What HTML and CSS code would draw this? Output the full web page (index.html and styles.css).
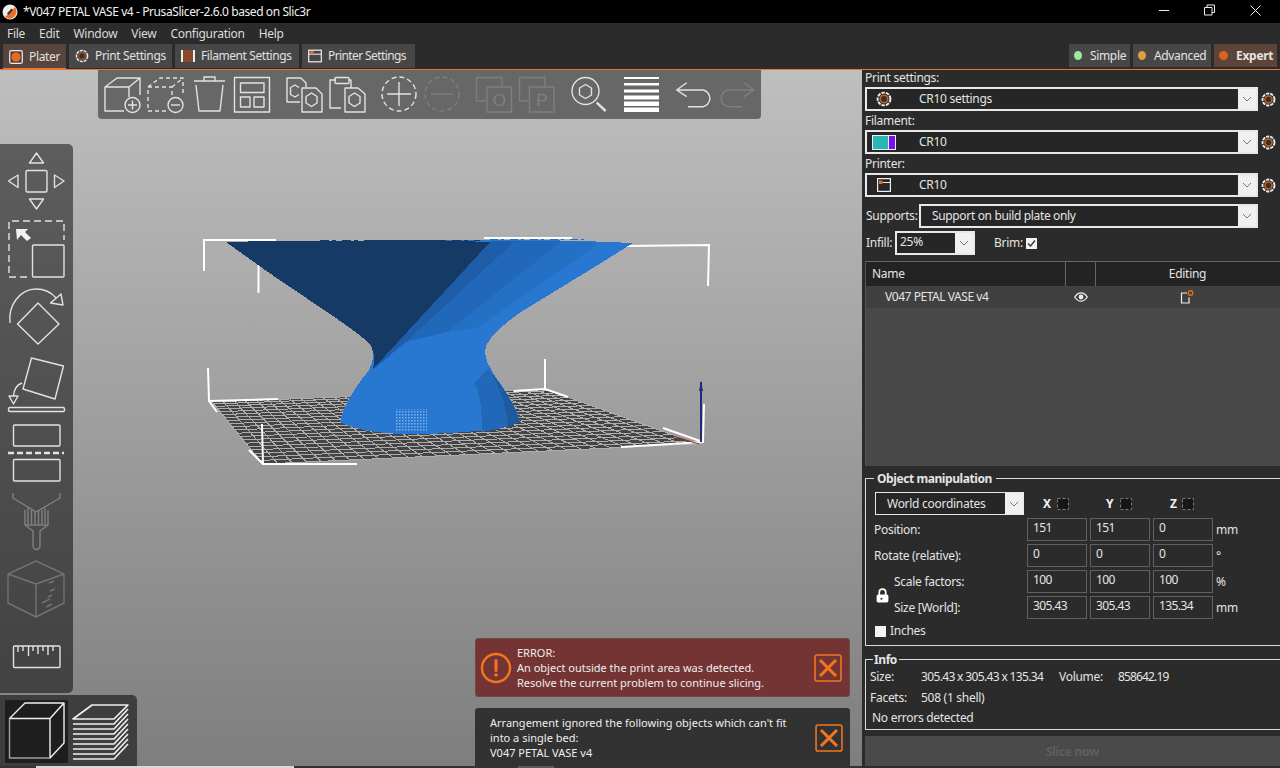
FILE: index.html
```html
<!DOCTYPE html>
<html lang="en">
<head>
<meta charset="utf-8">
<title>*V047 PETAL VASE v4 - PrusaSlicer-2.6.0 based on Slic3r</title>
<link rel="stylesheet" href="styles.css">
</head>
<body>
<header class="titlebar">
  <svg class="logo" viewBox="0 0 16 16"><circle cx="8" cy="8" r="7.500" fill="#eee"/><path d="M3 13 13 3a7 7 0 0 1 1.500 5A7 7 0 0 1 8 14.700 7 7 0 0 1 3 13z" fill="#e9702a"/><path d="M5 9.500 9.500 4.500 11 6 6.500 11z" fill="#333"/></svg>
  <span class="title-text">*V047 PETAL VASE v4 - PrusaSlicer-2.6.0 based on Slic3r</span>
  <div class="winctl">
    <svg viewBox="0 0 140 23" width="140" height="23"><path class="w" d="M19 10.500h10"/><path class="w" d="M64.500 7.500h7.500v7.500h-7.500zM67 7.500V5h7.500v7.500H72"/><path class="w" d="M110.500 5.500 120.500 15.500M120.500 5.500 110.500 15.500"/></svg>
  </div>
</header>
<nav class="menubar"><span>File</span><span>Edit</span><span>Window</span><span>View</span><span>Configuration</span><span>Help</span></nav>
<div class="tabbar">
  <div class="tab active"><svg class="tabic" viewBox="0 0 14 14"><rect x=".7" y=".7" width="12.600" height="12.600" rx="1.500" fill="none" stroke="#eee" stroke-width="1.200"/><circle cx="7" cy="7" r="4.500" fill="#ed6b21"/></svg>Plater</div>
  <div class="tab t-print"><svg class="tabic" viewBox="0 0 14 14"><circle cx="7" cy="7" r="5.600" fill="none" stroke="#eee" stroke-width="1.500" stroke-dasharray="3 .9"/><circle cx="7" cy="7" r="3.300" fill="#333" stroke="#a5521f" stroke-width="1.200"/></svg>Print Settings</div>
  <div class="tab t-fil"><svg class="tabic" viewBox="0 0 14 14"><rect x="0" y="1" width="14" height="12" fill="#8a4a2a"/><rect x="0" y="1" width="2" height="12" fill="#eee"/><rect x="12" y="1" width="2" height="12" fill="#eee"/></svg>Filament Settings</div>
  <div class="tab t-prn"><svg class="tabic" viewBox="0 0 14 14"><rect x=".7" y="1.200" width="12.600" height="11.600" fill="none" stroke="#eee" stroke-width="1.200"/><path d="M.7 5.200h12.600" stroke="#eee"/><rect x="2" y="2" width="3.500" height="3" fill="#ed6b21"/></svg>Printer Settings</div>
  <div class="modes">
    <div class="mode m-simple"><i class="dot green"></i>Simple</div>
    <div class="mode m-adv"><i class="dot amber"></i>Advanced</div>
    <div class="mode on"><i class="dot orange"></i>Expert</div>
  </div>
</div>
<main class="main">
  <section class="canvas">
    <svg class="scene" id="scene" viewBox="0 70 862 698" width="862" height="698">
      <defs><pattern id="dots" width="3" height="3" patternUnits="userSpaceOnUse"><rect width="1.500" height="1.500" fill="#7fb3e8"/></pattern></defs>
      <polygon class="bed" points="212,402 545,389 698,444 263,464"/>
      <g id="grid" class="grid"></g>
      <path class="bbox" d="M204 271V240H276M244 246 355 248M258.500 249V293M484 238H572M626 246 709 245 708 286M208 368 209 401 278 399M209 401 217 412M545 359V389L568 397M514 391 545 389M262 424 263 464 357 464M263 464 249 450M704 404 703 442 621 447M703 442 663 428"/>
      <g class="vase">
      <path d="M226 242C300 240 380 241 427 240 500 239 570 240 633 243 600 264 560 288 521 312 498 328 484 342 485 353 486 366 497 378 506 392 514 405 519 414 520 422 500 430 460 434 410 434 380 434 355 430 340 422 342 410 350 394 369 370 376 358 373 348 369 343 345 322 300 295 258 265Z" fill="#2878d2"/>
      <path d="M226 242C300 240 380 241 427 240L491 242 373 369C376 358 373 348 369 343 345 322 300 295 258 265Z" fill="#153a66"/>
      <path d="M491 241 515 241 406 342 375 368 373 369Z" fill="#1e5ea8"/>
      <path d="M515 241 562 241 447 332 406 342Z" fill="#2168b8"/>
      <path d="M562 241 600 243 477 328 447 332Z" fill="#2470c4"/>
      <path d="M488 368C497 378 514 405 520 422 510 427 495 430 482 432 482 410 480 390 474 384Z" fill="#2268b8"/>
      <path d="M492 374C503 386 516 408 520 422L508 426C507 408 500 388 492 374Z" fill="#1f5a9e"/>
      <rect x="396" y="409" width="31" height="22" fill="url(#dots)"/>
      <path d="M320 240.500H480" stroke="#153a66" stroke-width="1" stroke-dasharray="9 3 4 6"/>
      <path d="M490 239.500H590" stroke="#2070c4" stroke-width="1" stroke-dasharray="8 3 3 6"/>
      </g>
      <path d="M701 442V382" stroke="#1c2b80" stroke-width="2"/><path d="M699 391 701 381 703 391Z" fill="#1c2b80"/>
      <path d="M673 436 699 444" stroke="#8b2a1a" stroke-width="1"/>
    </svg>

    <div class="topbar">
      <svg viewBox="98 70 663 49" width="663" height="49">
        <g class="ic">
          <path d="M124 111H105V87L117 78H140V95M105 87H129V97M129 87 140 78"/><circle cx="132.500" cy="105" r="7.500"/><path d="M128 105H137M132.500 100.500V109.500"/>
          <path class="dash" d="M166 111H148V87L160 78H183V95M148 87H172V97M172 87 183 78"/><circle cx="175.500" cy="105" r="7.500"/><path d="M171 105H180"/>
          <path d="M194 81H225M204 81V77H215V81M196 85 199 111H220L223 85"/>
          <rect x="234.500" y="77.500" width="35" height="34.500"/><rect x="240.500" y="83" width="23.500" height="9.500"/><rect x="240.500" y="97" width="9.500" height="10"/><rect x="254" y="97" width="10" height="10"/>
          <path d="M300 102H287V78H301L306 83V87M299 87.500 295 85 290.500 87.500V94.500L295 97 299 94.500"/>
          <path d="M302 88H316L322 94V112H302Z"/><path d="M311.500 93 317 96.500V103L311.500 106.500 306 103V96.500Z"/>
          <path d="M341 108H330V80H336M349 80H351V88"/><rect x="335" y="77.500" width="14" height="6" rx="1"/>
          <path d="M345 88H358L365 94V112H345Z"/><path d="M354.500 93 360 96.500V103L354.500 106.500 349 103V96.500Z"/>
          <circle class="dash2" cx="399" cy="94" r="17"/><path d="M387 94H411M399 82V106"/>
          <circle cx="585.500" cy="91" r="13.500"/><path d="M585.500 84.500 591.500 88V95L585.500 98.500 579.500 95V88Z"/><path class="thick" d="M596.700 102.700 605.700 111"/>
          <path d="M686.700 82.700 676.700 90 686.700 96.700M676.700 90H703A8.500 8.500 0 0 1 703 106.700H688"/>
        </g>
        <g class="ic dim">
          <circle class="dash2" cx="442" cy="94" r="17"/><path d="M431 94H453"/>
          <path d="M486 101H476.500V77.500H502V87"/><rect x="487" y="87" width="24.500" height="25"/>
          <path d="M529 101H519.500V77.500H545V87"/><rect x="529.500" y="87" width="24.500" height="25"/>
          <path d="M744 82.700 754 90 744 96.700M754 90H728A8.500 8.500 0 0 0 728 106.700H742"/>
        </g>
        <text class="icl" x="499.300" y="106">O</text><text class="icl" x="541.800" y="106">P</text>
        <g fill="#fff"><rect x="624" y="77" width="35" height="2"/><rect x="624" y="83" width="35" height="2.500"/><rect x="624" y="89.500" width="35" height="3"/><rect x="624" y="95.500" width="35" height="4"/><rect x="624" y="101.500" width="35" height="4.500"/><rect x="624" y="107.500" width="35" height="4.500"/></g>
      </svg>
    </div>

    <div class="leftbar">
      <svg viewBox="0 144 73 549" width="73" height="549">
        <g class="ic">
          <path d="M29.500 163 36.500 153 43.500 163Z"/><path d="M18 175V187.500L8.500 181Z"/><path d="M54.500 175V187.500L64 181Z"/><path d="M29.500 199 36.500 209 43.500 199Z"/><rect x="26" y="170.500" width="21" height="21.500" rx="1.500"/>
          <path class="dash3" d="M27 277H9V221H64V240"/><rect x="32.500" y="245" width="31.500" height="32" rx="1"/>
          <path d="M10 323C8 305 20 289 36 289 44 289 51 292 56 298"/><path d="M50.500 303 61 294 63 305Z"/><path d="M38 303 59 324 38 344 17.500 324Z"/>
          <path d="M31.500 358 63.500 366 55 399 23 389Z"/><rect x="8.500" y="407.500" width="56" height="4" rx="1.500"/><path d="M22 383C16 385 14 390 13.500 396"/><path d="M9 396H18L13.500 404Z"/>
          <rect x="13.500" y="425" width="46.500" height="21" rx="1"/><path class="dash4" d="M8 453H64"/><rect x="13.500" y="459.500" width="46.500" height="21.500" rx="1"/>
          <rect x="13.500" y="646" width="46.500" height="21.500" rx="1"/>
          <path d="M18 646V652M23 646V651M28.500 646V656M33 646V651M38 646V654M43 646V651M48 646V655M53 646V651"/>
        </g>
        <path d="M16 229 H28L25 232 31 238 27 241 21 235 17 240Z" fill="#f2f2f2"/>
        <g class="ic dim2">
          <path d="M13 493V498L36 512 60 498V493"/><path d="M25 510V525L33 531V546A3.500 3.500 0 0 0 40 546V531L48 525V510M25 525H48M28 508V524M31.500 510V524M35 511V524M38.500 511V524M42 510V524M45 508V524"/>
        </g>
        <g class="ic dim3">
          <path d="M36 561 64 574V603L36 617 8 603V574ZM8 574 36 584 64 574M36 584V617"/>
          <path d="M49 583 54 581M50 591 55 589M48 597 52 595M42 603 50 599M46 607 52 604"/>
        </g>
      </svg>
    </div>

    <div class="viewbar">
      <div class="view-sel"></div>
      <svg viewBox="0 695 137 71" width="137" height="71">
        <g class="ic cube"><path d="M64 703H25L9.500 718.500H50L64 703V743L50 758V718.500"/><path class="g" d="M9.500 718.500V758H50"/></g>
        <g class="ic cube thickl">
          <path d="M73 719 92 705H128L114 719Z"/>
          <path d="M73 724H114L128 709M73 729H114L128 714M73 734H114L128 719M73 739H114L128 724M73 744H114L128 729M73 749H114L128 734M73 754H114L128 739M73 759H114L128 744"/>
        </g>
      </svg>
    </div>

    <div class="notes">
      <div class="note err">
        <svg class="bang" viewBox="0 0 32 32"><circle cx="16" cy="16" r="14" fill="none" stroke="#f2751f" stroke-width="2.400"/><path d="M16 8.500V18.500" stroke="#f2751f" stroke-width="3" stroke-linecap="round"/><circle cx="16" cy="23" r="1.800" fill="#f2751f"/></svg>
        <p>ERROR:<br>An object outside the print area was detected.<br>Resolve the current problem to continue slicing.</p>
        <svg class="close" viewBox="0 0 27 27"><rect x="1" y="1" width="25" height="25" rx="2" fill="none" stroke="#f2751f" stroke-width="1.500"/><path d="M5.800 5.800 21.200 21.200M21.200 5.800 5.800 21.200" stroke="#f2751f" stroke-width="3"/></svg>
      </div>
      <div class="note plain">
        <p>Arrangement ignored the following objects which can't fit<br>into a single bed:<br>V047 PETAL VASE v4</p>
        <svg class="close" viewBox="0 0 27 27"><rect x="1" y="1" width="25" height="25" rx="2" fill="none" stroke="#f2751f" stroke-width="1.500"/><path d="M5.800 5.800 21.200 21.200M21.200 5.800 5.800 21.200" stroke="#f2751f" stroke-width="3"/></svg>
      </div>
    </div>
    <div class="strip"><i class="s1"></i><i class="s2"></i></div>
  </section>

  <aside class="side">
    <div class="lbl l0">Print settings:</div>
    <div class="preset">
      <div class="combo grow"><span class="swatch"><svg width="16" height="16" viewBox="0 0 14 14"><circle cx="7" cy="7" r="5.600" fill="none" stroke="#eee" stroke-width="1.700" stroke-dasharray="3 .9"/><circle cx="7" cy="7" r="3.300" fill="#333" stroke="#c8621f" stroke-width="1.400"/></svg></span><span class="val">CR10 settings</span><span class="arrow"><svg width="10" height="6" viewBox="0 0 10 6"><path d="M1 1 5 5 9 1"/></svg></span></div>
      <svg class="gear" viewBox="0 0 14 14"><circle cx="7" cy="7" r="5.600" fill="none" stroke="#eee" stroke-width="1.700" stroke-dasharray="3 .9"/><circle cx="7" cy="7" r="3.300" fill="#333" stroke="#c8621f" stroke-width="1.400"/></svg>
    </div>
    <div class="lbl">Filament:</div>
    <div class="preset">
      <div class="combo grow"><span class="swatch fil"><i class="c1"></i><i class="c2"></i></span><span class="val">CR10</span><span class="arrow"><svg width="10" height="6" viewBox="0 0 10 6"><path d="M1 1 5 5 9 1"/></svg></span></div>
      <svg class="gear" viewBox="0 0 14 14"><circle cx="7" cy="7" r="5.600" fill="none" stroke="#eee" stroke-width="1.700" stroke-dasharray="3 .9"/><circle cx="7" cy="7" r="3.300" fill="#333" stroke="#c8621f" stroke-width="1.400"/></svg>
    </div>
    <div class="lbl">Printer:</div>
    <div class="preset">
      <div class="combo grow"><span class="swatch"><svg width="14" height="14" viewBox="0 0 14 14"><rect x=".6" y=".6" width="12.800" height="12.800" fill="none" stroke="#eee" stroke-width="1.200"/><path d="M6 4.500h7.300" stroke="#eee"/><rect x="2" y="2.500" width="3.500" height="3.500" fill="#ed6b21"/></svg></span><span class="val">CR10</span><span class="arrow"><svg width="10" height="6" viewBox="0 0 10 6"><path d="M1 1 5 5 9 1"/></svg></span></div>
      <svg class="gear" viewBox="0 0 14 14"><circle cx="7" cy="7" r="5.600" fill="none" stroke="#eee" stroke-width="1.700" stroke-dasharray="3 .9"/><circle cx="7" cy="7" r="3.300" fill="#333" stroke="#c8621f" stroke-width="1.400"/></svg>
    </div>
    <div class="supports">
      <span class="sl">Supports:</span>
      <div class="combo grow"><span class="val plainval">Support on build plate only</span><span class="arrow"><svg width="10" height="6" viewBox="0 0 10 6"><path d="M1 1 5 5 9 1"/></svg></span></div>
    </div>
    <div class="infill">
      <span class="il">Infill:</span>
      <div class="combo small"><span class="val up">25%</span><span class="arrow"><svg width="10" height="6" viewBox="0 0 10 6"><path d="M1 1 5 5 9 1"/></svg></span></div>
      <span class="brim">Brim:</span>
      <span class="check"><svg width="11" height="11" viewBox="0 0 11 11"><path d="M2 5.500 4.500 8 9 2.500" fill="none" stroke="#333" stroke-width="1.400"/></svg></span>
    </div>
    <div class="list">
      <div class="list-head"><span class="h-name">Name</span><span class="h-eye"></span><span class="h-edit">Editing</span></div>
      <div class="list-row"><span class="r-name">V047 PETAL VASE v4</span>
        <span class="r-eye"><svg width="14" height="10" viewBox="0 0 14 10"><path d="M.7 5C3 1.500 5 .8 7 .8S11 1.500 13.300 5C11 8.500 9 9.200 7 9.200S3 8.500 .7 5Z" fill="none" stroke="#eee" stroke-width="1.300"/><circle cx="7" cy="5" r="2.400" fill="#eee"/></svg></span>
        <span class="r-edit"><svg width="14" height="14" viewBox="0 0 14 14"><path d="M7 3H1.500V13H9V7.500" fill="none" stroke="#eee" stroke-width="1.200"/><circle cx="10.500" cy="3" r="2.300" fill="none" stroke="#e07020" stroke-width="1.400"/></svg></span></div>
    </div>
    <div class="group obj">
      <div class="legend">Object manipulation</div>
      <div class="obj-grid">
        <div class="combo coord"><span class="val cv">World coordinates</span><span class="arrow"><svg width="10" height="6" viewBox="0 0 10 6"><path d="M1 1 5 5 9 1"/></svg></span></div>
        <div class="axis ax"><b>X</b><svg width="14" height="14" viewBox="0 0 14 14"><rect class="drop" x="1.500" y="1.500" width="11" height="11"/></svg></div>
        <div class="axis ay"><b>Y</b><svg width="14" height="14" viewBox="0 0 14 14"><rect class="drop" x="1.500" y="1.500" width="11" height="11"/></svg></div>
        <div class="axis az"><b>Z</b><svg width="14" height="14" viewBox="0 0 14 14"><rect class="drop" x="1.500" y="1.500" width="11" height="11"/></svg></div>
        <div class="unit"></div>
        <div class="rl">Position:</div><div class="f">151</div><div class="f">151</div><div class="f">0</div><div class="unit">mm</div>
        <div class="rl">Rotate (relative):</div><div class="f">0</div><div class="f">0</div><div class="f">0</div><div class="unit">°</div>
        <div class="lockcell">
          <svg class="lock" viewBox="0 0 12 14"><path d="M3 7V4A3 3 0 0 1 9 4V7" fill="none" stroke="#fff" stroke-width="1.600"/><rect x=".5" y="6" width="11" height="7.500" rx="1.500" fill="#fff"/><circle cx="5" cy="10" r="1" fill="#333"/></svg>
          <div class="lockl"><span>Scale factors:</span><span>Size [World]:</span></div>
        </div>
        <div class="f">100</div><div class="f">100</div><div class="f">100</div><div class="unit">%</div>
        <div class="f">305.43</div><div class="f">305.43</div><div class="f">135.34</div><div class="unit">mm</div>
      </div>
      <div class="inches"><i class="box"></i>Inches</div>
    </div>
    <div class="group info">
      <div class="legend il2">Info</div>
      <div class="irow"><span class="k">Size:</span><span class="v1">305.43 x 305.43 x 135.34</span><span class="k2">Volume:</span><span class="num">858642.19</span></div>
      <div class="irow"><span class="k">Facets:</span><span>508 (1 shell)</span></div>
      <div class="irow no">No errors detected</div>
    </div>
    <div class="slice">Slice now</div>
  </aside>
</main>
<script src="scene.js"></script>
</body>
</html>
```
FILE: styles.css
```css
* { box-sizing: border-box; }
html, body { margin: 0; height: 100%; overflow: hidden; }
body { width: 1280px; height: 768px; background: #2b2b2b; color: #e4e4e4; font: 12px/16px "Noto Sans", "Open Sans", sans-serif; letter-spacing: -.28px; display: flex; flex-direction: column; }

.titlebar { height: 23px; background: #000; color: #f0f0f0; display: flex; align-items: center; padding-left: 2px; flex: none; }
.logo { width: 16px; height: 16px; margin-right: 5px; }
.title-text { font-size: 12px; letter-spacing: -.41px; }
.winctl { margin-left: auto; height: 23px; }
.winctl svg { display: block; }
.w { fill: none; stroke: #eee; stroke-width: 1; }

.menubar { height: 21px; background: #2b2b2b; display: flex; gap: 14px; padding-left: 7px; align-items: center; flex: none; color: #dcdcdc; }

.tabbar { height: 26px; background: #2b2b2b; display: flex; gap: 3px; padding: 0 3px; border-bottom: 1px solid #e8763a; flex: none; }
.tab { height: 24px; background: #474747; display: flex; align-items: center; padding: 0 0 0 6px; gap: 6px; color: #e0e0e0; letter-spacing: -.36px; white-space: nowrap; }
.t-print { width: 103px; }
.t-fil { width: 124px; letter-spacing: -.42px; }
.t-prn { width: 113px; letter-spacing: -.6px; }
.tab.active { width: 63px; background: #57453d; box-shadow: inset 0 -1px 0 #e8763a; height: 25px; }
.tabic { width: 14px; height: 14px; flex: none; }
.modes { margin-left: auto; display: flex; gap: 3px; }
.mode { width: 61px; height: 23px; background: #474747; display: flex; align-items: center; gap: 8px; padding: 0 0 0 5px; white-space: nowrap; letter-spacing: -.35px; }
.m-adv { width: 78px; }
.mode.on { width: 63px; background: #5c4438; font-weight: 700; gap: 8px; letter-spacing: -.28px; }
.dot { width: 8px; height: 9px; border-radius: 50%; display: block; margin-top: -1px; flex: none; }
.dot.green { background: #9fe8a2; }
.dot.amber { background: #e0a040; }
.dot.orange { width: 9px; background: #d9641e; }

.main { flex: 1; display: flex; min-height: 0; }
.canvas { width: 862px; position: relative; background: linear-gradient(#bfbfbf, #7e7e7e); flex: none; }
.scene { position: absolute; left: 0; top: 0; }
.bed { fill: #444; }
.grid { shape-rendering: crispEdges; }
.grid line { stroke: #adadad; stroke-width: 1; }
.bbox { fill: none; stroke: #fff; stroke-width: 2; }
.vase { shape-rendering: crispEdges; }

.ic { fill: none; stroke: #e2e2e2; stroke-width: 1.400; stroke-linejoin: round; }
.ic.dim { stroke: #7f7f7f; }
.ic.dim2 { stroke: #808080; }
.ic.dim3 { stroke: #727272; }
.ic .dash { stroke-dasharray: 4 3; }
.ic .dash2 { stroke-dasharray: 5 3; }
.ic .dash3 { stroke-dasharray: 7 4; }
.ic .dash4 { stroke-dasharray: 6 3; stroke-width: 2.500; }
.ic .thick { stroke-width: 2.400; }
.ic.cube { stroke: #f0f0f0; }
.ic.thickl { stroke-width: 1.600; }
.ic .g { stroke: #a0a0a0; }
.icl { font: 17px "Liberation Sans", sans-serif; fill: #7f7f7f; text-anchor: middle; letter-spacing: 0; }

.topbar { position: absolute; left: 98px; top: 0; width: 663px; height: 49px; background: #676767; border-radius: 0 0 4px 4px; }
.topbar svg, .leftbar svg, .viewbar svg { display: block; }
.leftbar { position: absolute; left: 0; top: 74px; width: 73px; height: 549px; background: linear-gradient(#5d5d5d, #424242); border-radius: 0 5px 5px 0; }
.viewbar { position: absolute; left: 0; top: 625px; width: 137px; height: 71px; background: #3e3e3e; border-radius: 0 5px 0 0; }
.view-sel { position: absolute; left: 5px; top: 5px; width: 63px; height: 63px; background: #1e1e1e; }
.viewbar svg { position: relative; }

.notes { position: absolute; left: 475px; top: 568px; width: 375px; display: flex; flex-direction: column; gap: 11px; font-size: 11px; line-height: 15px; letter-spacing: 0; color: #eee; }
.note { position: relative; border-radius: 3px; }
.note p { margin: 0; }
.note.err { height: 59px; background: #743434; border: 1px solid #6a4a4a; padding: 6px 0 0 41px; }
.note.plain { height: 58px; background: #323232; padding: 7px 0 0 15px; border-radius: 3px 3px 0 0; }
.bang { position: absolute; left: 4px; top: 13px; width: 32px; height: 32px; }
.close { position: absolute; right: 7px; width: 28px; height: 28px; top: 15px; }
.note.plain .close { top: 16px; right: 7px; }
.strip { position: absolute; left: 0; right: 0; bottom: 0; height: 2px; background: #333; }
.strip i { position: absolute; top: 0; height: 2px; display: block; }
.s1 { left: 36px; width: 258px; background: #d8d8d8; }
.s2 { left: 518px; width: 36px; background: #5a5a5a; }

.side { width: 418px; background: #2b2b2b; padding-left: 3px; flex: none; display: flex; flex-direction: column; }
.lbl { height: 19px; line-height: 19px; }
.l0 { height: 17px; line-height: 15px; }
.preset { display: flex; align-items: center; height: 24px; gap: 3px; }
.preset .grow { width: 393px; flex: none; }
.gear { width: 15px; height: 15px; flex: none; }
.combo { height: 24px; display: flex; align-items: stretch; border: 2px solid #e8e8e8; background: #262626; color: #e4e4e4; }
.swatch { width: 52px; display: flex; align-items: center; justify-content: center; flex: none; padding-right: 18px; }
.swatch.fil { justify-content: flex-start; padding: 0 0 0 5px; }
.swatch i { display: block; height: 15px; }
.c1 { width: 16px; background: #2cb5b5; border: 1px solid #eee; border-right: 0; }
.c2 { width: 8px; background: #7a0ff0; border: 1px solid #eee; }
.val { flex: 1; line-height: 20px; }
.plainval { padding-left: 11px; letter-spacing: -.35px; }
.arrow { width: 18px; background: #f0f0f0; display: flex; align-items: center; justify-content: center; flex: none; }
.arrow path { fill: none; stroke: #777; stroke-width: 1; }

.supports { display: flex; align-items: center; height: 24px; margin-top: 7px; }
.sl { width: 54px; padding-left: 1px; }
.supports .grow { width: 339px; flex: none; }
.infill { display: flex; align-items: center; height: 24px; margin-top: 3px; }
.il { width: 30px; padding-left: 1px; }
.small { width: 80px; }
.up { padding-left: 3px; line-height: 17px; }
.brim { margin-left: 19px; margin-right: 4px; width: 28px; }
.check { width: 11px; height: 11px; background: #f2f2f2; display: block; }
.check svg { display: block; }

.list { margin-top: 6px; height: 205px; background: #484848; border-top: 1px solid #666; border-left: 1px solid #555; flex: none; }
.list-head { height: 24px; background: #232323; display: flex; line-height: 23px; }
.h-name { width: 200px; padding-left: 6px; border-right: 1px solid #666; }
.h-eye { width: 30px; border-right: 1px solid #666; }
.h-edit { width: 183px; text-align: center; }
.list-row { height: 22px; background: #404040; display: flex; align-items: center; }
.r-name { width: 200px; padding-left: 19px; flex: none; letter-spacing: -.45px; }
.r-eye { width: 30px; display: flex; justify-content: center; flex: none; }
.r-edit { width: 183px; display: flex; justify-content: center; padding-right: 1px; }
.r-eye svg, .r-edit svg { display: block; }

.group { border: 1px solid #dcdcdc; border-right: 0; position: relative; flex: none; }
.legend { position: absolute; top: -8px; left: 8px; background: #2b2b2b; padding: 0 4px 0 3px; font-weight: 700; letter-spacing: -.42px; }
.obj { margin-top: 12px; height: 168px; }
.obj-grid { display: grid; grid-template-columns: 150px 60px 60px 60px 60px; grid-auto-rows: 23px; gap: 3px; padding: 13px 0 0 8px; }
.coord { height: 23px; margin-left: 1px; width: 149px; border-width: 1.500px; }
.cv { padding-left: 11px; line-height: 21px; }
.axis { display: flex; align-items: center; color: #f2f2f2; gap: 6px; padding-left: 16px; }
.axis b { width: 7px; }
.az { padding-left: 17px; gap: 4px; }
.drop { fill: #161616; stroke: #7a7a7a; stroke-width: 1; stroke-dasharray: 3 2; }
.rl { line-height: 23px; }
.f { border: 1px solid #606060; padding-left: 5px; line-height: 18px; color: #e6e6e6; letter-spacing: -.6px; }
.unit { line-height: 23px; }
.lockcell { grid-row: span 2; display: flex; align-items: center; }
.lock { width: 13px; height: 15px; margin-left: 2px; margin-right: 5px; margin-top: 2px; flex: none; }
.lockl { display: flex; flex-direction: column; gap: 3px; line-height: 23px; }
.inches { display: flex; align-items: center; gap: 4px; padding: 4px 0 0 9px; }
.box { width: 11px; height: 11px; background: #f4f4f4; display: block; }
.info { margin-top: 13px; height: 71px; padding: 7px 0 0 4px; }
.il2 { top: -8px; left: 7px; padding: 0 2px 0 1px; }
.irow { display: flex; height: 20.500px; align-items: center; }
.k { width: 51px; }
.v1 { width: 138px; letter-spacing: -.65px; }
.k2 { width: 59px; }
.num { letter-spacing: -.85px; }
.no { padding-left: 2px; }
.slice { margin-top: 6px; height: 30px; background: #4a4a4a; color: #5f5f5f; font-weight: 700; text-align: center; line-height: 32px; }
```
FILE: scene.js
```js
// Draws the print bed grid as a bilinear mesh on the bed's quadrilateral.
(function () {
  var ns = "http://www.w3.org/2000/svg";
  var g = document.getElementById("grid");
  var bl = [212, 402], br = [545, 389], fr = [698, 444], fl = [263, 464];
  function mix(a, b, t) { return [a[0] + (b[0] - a[0]) * t, a[1] + (b[1] - a[1]) * t]; }
  function add(a, b) {
    var l = document.createElementNS(ns, "line");
    l.setAttribute("x1", a[0]); l.setAttribute("y1", a[1]);
    l.setAttribute("x2", b[0]); l.setAttribute("y2", b[1]);
    g.appendChild(l);
  }
  var i, t;
  for (i = 0; i <= 20; i++) {
    t = Math.pow(i / 20, 1.15);
    add(mix(bl, fl, t), mix(br, fr, t));
  }
  for (i = 0; i <= 30; i++) {
    t = i / 30;
    add(mix(bl, br, t), mix(fl, fr, t));
  }
})();
```
